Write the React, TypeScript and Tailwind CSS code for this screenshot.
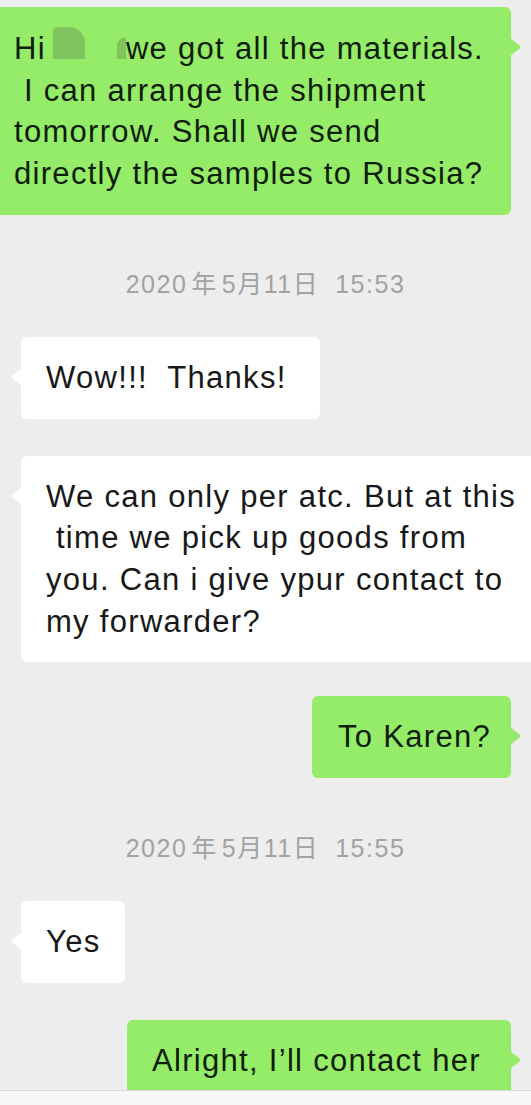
import React from "react";

const GREEN = "bg-[#95ec69]";

function TailLeft() {
  return (
    <svg
      width="11"
      height="18"
      viewBox="0 0 11 18"
      className="absolute -left-[10px] top-[31px]"
    >
      <path d="M11 0 L1.3 7.5 Q0 9 1.3 10.5 L11 18 Z" fill="#ffffff" />
    </svg>
  );
}

function TailRight() {
  return (
    <svg
      width="11"
      height="18"
      viewBox="0 0 11 18"
      className="absolute -right-[10px] top-[31px]"
    >
      <path d="M0 0 L9.7 7.5 Q11 9 9.7 10.5 L0 18 Z" fill="#95ec69" />
    </svg>
  );
}

function Lines({ lines }: { lines: React.ReactNode[] }) {
  return (
    <>
      {lines.map((l, i) => (
        <div key={i} className="whitespace-pre">
          {l}
        </div>
      ))}
    </>
  );
}

// date, then time, WeChat style
function Stamp({ day, time }: { day: string; time: string }) {
  return (
    <div className="flex justify-center text-[25px] leading-[30px] tracking-[1.5px] text-[#a2a2a2] font-['Liberation_Sans','Noto_Sans_CJK_SC',sans-serif]">
      <span>2020</span>
      <span className="mx-[4px]">年</span>
      <span>5月{day}日</span>
      <span className="ml-[16px]">{time}</span>
    </div>
  );
}

export default function App() {
  return (
    <div className="w-[531px] h-[1105px] bg-[#ededed] overflow-hidden flex flex-col font-['Liberation_Sans',sans-serif] text-[31px] leading-[41.7px] tracking-[1.3px]">
      <div className="h-[1090px] overflow-hidden flex flex-col">
        {/* outgoing, cut on the left */}
        <div className={`relative mt-[7px] -ml-[12px] mr-[20px] rounded-md ${GREEN} pl-[26px] py-[20px] text-[#0e1d07]`}>
          <TailRight />
          <Lines
            lines={[
              <>
                Hi
                <span className="inline-block w-[32px] h-[32px] ml-[7px] rounded-tr-[16px] rounded-tl-[4px] bg-[#7fc35c]" />
                <span className="inline-block w-[9px] h-[22px] ml-[32px] rounded-tl-[9px] bg-[#7fc35c]" />
                we got all the materials.
              </>,
              " I can arrange the shipment",
              "tomorrow. Shall we send",
              "directly the samples to Russia?",
            ]}
          />
        </div>

        <div className="mt-[54px]">
          <Stamp day="11" time="15:53" />
        </div>

        <div className="mt-[38px] pl-[21px] flex">
          <div className="relative w-[299px] rounded-md bg-white pl-[25px] py-[20px] text-[#181818]">
            <TailLeft />
            <Lines lines={["Wow!!!  Thanks!"]} />
          </div>
        </div>

        <div className="mt-[37px] pl-[21px] flex">
          <div className="relative w-[540px] shrink-0 rounded-md bg-white pl-[25px] py-[20px] text-[#181818]">
            <TailLeft />
            <Lines
              lines={[
                "We can only per atc. But at this",
                " time we pick up goods from",
                "you. Can i give ypur contact to",
                "my forwarder?",
              ]}
            />
          </div>
        </div>

        <div className="mt-[34px] pr-[20px] flex justify-end">
          <div className={`relative w-[199px] rounded-md ${GREEN} pl-[26px] py-[20px] text-[#0e1d07]`}>
            <TailRight />
            <Lines lines={["To Karen?"]} />
          </div>
        </div>

        <div className="mt-[55px]">
          <Stamp day="11" time="15:55" />
        </div>

        <div className="mt-[38px] pl-[21px] flex">
          <div className="relative w-[104px] rounded-md bg-white pl-[25px] py-[20px] text-[#181818]">
            <TailLeft />
            <Lines lines={["Yes"]} />
          </div>
        </div>

        <div className="mt-[37px] pr-[20px] flex justify-end">
          <div className={`relative w-[384px] shrink-0 rounded-md ${GREEN} pl-[25px] py-[20px] text-[#0e1d07]`}>
            <TailRight />
            <Lines lines={["Alright, I’ll contact her"]} />
          </div>
        </div>
      </div>
      <div className="h-[15px] border-t border-[#d8d8d8] bg-[#f7f7f7]" />
    </div>
  );
}
